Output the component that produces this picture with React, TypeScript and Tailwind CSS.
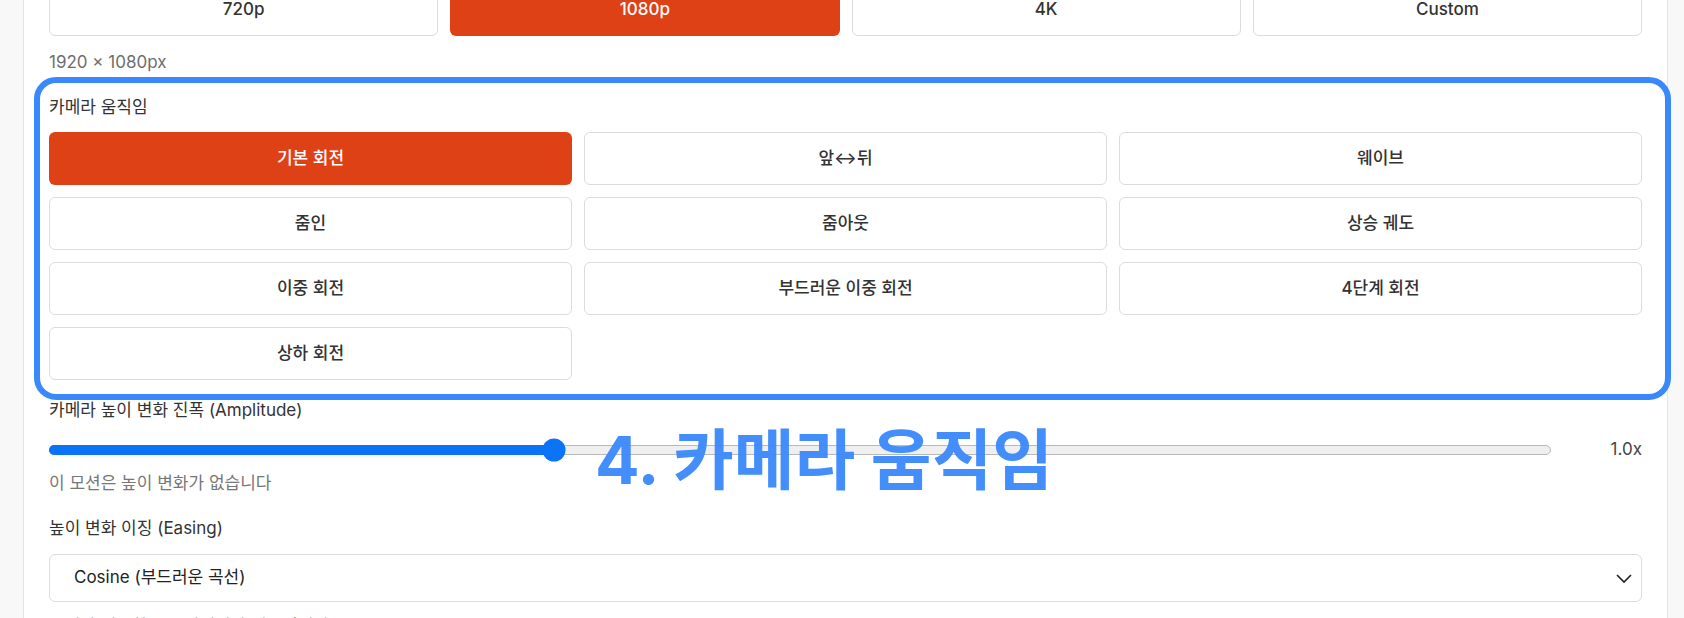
import { useState } from "react";

const resolutions = ["720p", "1080p", "4K", "Custom"];

const motions = [
  "기본 회전",
  "앞↔뒤",
  "웨이브",
  "줌인",
  "줌아웃",
  "상승 궤도",
  "이중 회전",
  "부드러운 이중 회전",
  "4단계 회전",
  "상하 회전",
];

const App = () => {
  const [resolution, setResolution] = useState("1080p");
  const [motion, setMotion] = useState("기본 회전");

  return (
    <div
      className="relative h-[618px] overflow-hidden bg-[#f8f8f8] text-[17px] text-[#333]"
      style={{ fontFamily: '"Inter", "Noto Sans CJK KR", sans-serif' }}
    >
      <div className="ml-[23px] h-full w-[1645px] overflow-hidden border-x border-[#e4e4e4] bg-white px-[25px]">
        {/* 해상도 */}
        <div className="-mt-4 grid grid-cols-4 gap-3">
          {resolutions.map((r) => (
            <button
              key={r}
              onClick={() => setResolution(r)}
              className={
                r === resolution
                  ? "h-[52px] rounded-md bg-[#df4116] font-medium text-white"
                  : "h-[52px] rounded-md border border-[#dcdcdc] bg-white font-medium text-[#333]"
              }
            >
              {r}
            </button>
          ))}
        </div>
        <p className="mt-[14px] leading-6 text-[#6e6e6e]">1920 × 1080px</p>

        {/* 카메라 움직임 */}
        <div className="mt-[21px]">
          <label className="block leading-6 text-[#333]">카메라 움직임</label>
          <div className="mt-[13px] grid grid-cols-3 gap-3">
            {motions.map((m) => (
              <button
                key={m}
                onClick={() => setMotion(m)}
                className={
                  m === motion
                    ? "h-[53px] rounded-md bg-[#df4116] font-medium text-white"
                    : "h-[53px] rounded-md border border-[#dcdcdc] bg-white font-medium text-[#333]"
                }
              >
                {m}
              </button>
            ))}
          </div>
        </div>

        {/* 진폭 */}
        <label className="mt-[18px] block leading-6">카메라 높이 변화 진폭 (Amplitude)</label>
        <div className="mt-4 flex h-6 items-center">
          <div className="relative h-[10px] flex-1 rounded-full border border-[#b9b9b9] bg-[#efefef]">
            <div className="absolute -left-px -top-px h-[10px] w-[33.6%] rounded-l-full bg-[#0b73f6]" />
            <div className="absolute left-[33.6%] top-1/2 h-[23px] w-[23px] -translate-x-1/2 -translate-y-1/2 rounded-full bg-[#0b73f6]" />
          </div>
          <span className="w-[91px] text-right text-[#444]">1.0x</span>
        </div>
        <p className="mt-[9px] leading-6 text-[#777]">이 모션은 높이 변화가 없습니다</p>

        {/* 이징 */}
        <label className="mt-[21px] block leading-6">높이 변화 이징 (Easing)</label>
        <div className="mt-[14px] flex h-12 items-center justify-between rounded-md border border-[#dcdcdc] bg-white pl-6 pr-2">
          <span className="text-[#222]">Cosine (부드러운 곡선)</span>
          <svg width="18" height="18" viewBox="0 0 18 18" fill="none" stroke="#222" strokeWidth="1.6">
            <polyline points="2,6 9,13 16,6" />
          </svg>
        </div>
        <p className="mt-[12px] leading-6 text-[#777]">높이가 변화하는 모션에서만 적용됩니다</p>
      </div>

      {/* annotation overlay */}
      <div className="pointer-events-none absolute left-[34px] top-[77px] h-[323px] w-[1637px] rounded-[22px] border-[6px] border-[#3a89fc]" />
      <div
        className="pointer-events-none absolute left-[595px] top-[427px] text-[66px] font-bold leading-none text-[#3a89fc] opacity-95"
        style={{ fontFamily: '"Inter", "Noto Sans CJK KR", sans-serif' }}
      >
        4. 카메라 움직임
      </div>
    </div>
  );
};

export default App;
